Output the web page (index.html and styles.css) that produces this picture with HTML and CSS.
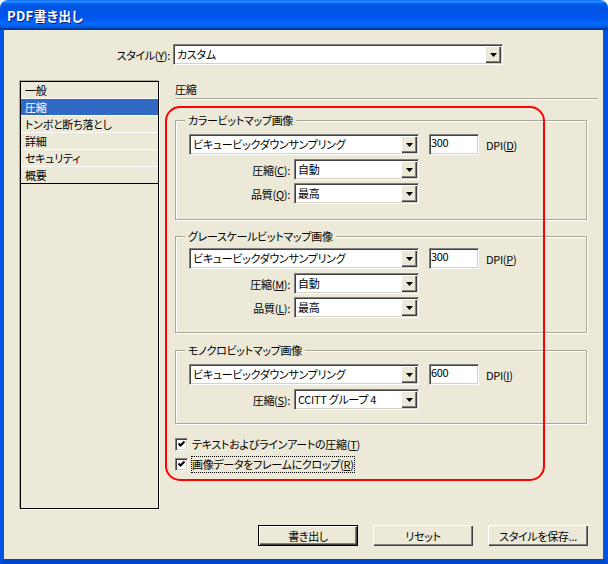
FILE: index.html
```html
<!DOCTYPE html>
<html lang="ja">
<head>
<meta charset="utf-8">
<title>PDF書き出し</title>
<link rel="stylesheet" href="styles.css">
</head>
<body>
<div class="window">
  <div class="titlebar"><span class="title">PDF書き出し</span></div>
  <div class="client">
    <div class="style-row">
      <span class="style-label">スタイル(<u>Y</u>):</span>
      <div class="combo combo-style"><span class="combo-text">カスタム</span><span class="drop"><svg width="7" height="4" viewBox="0 0 7 4"><polygon points="0,0 7,0 3.5,4" fill="#000"/></svg></span></div>
    </div>
    <div class="main">
      <ul class="nav">
        <li>一般</li>
        <li class="selected">圧縮</li>
        <li>トンボと断ち落とし</li>
        <li>詳細</li>
        <li>セキュリティ</li>
        <li class="last">概要</li>
      </ul>
      <div class="panel">
        <div class="panel-title">圧縮</div>

        <div class="group g1">
          <div class="group-title">カラービットマップ画像</div>
          <div class="row row-main">
            <div class="combo combo-method"><span class="combo-text">ビキュービックダウンサンプリング</span><span class="drop"><svg width="7" height="4" viewBox="0 0 7 4"><polygon points="0,0 7,0 3.5,4" fill="#000"/></svg></span></div>
            <div class="field">300</div>
            <span class="unit">DPI(<u>D</u>)</span>
          </div>
          <div class="row row-sub">
            <span class="sub-label">圧縮(<u>C</u>):</span>
            <div class="combo combo-sub"><span class="combo-text">自動</span><span class="drop"><svg width="7" height="4" viewBox="0 0 7 4"><polygon points="0,0 7,0 3.5,4" fill="#000"/></svg></span></div>
          </div>
          <div class="row row-sub">
            <span class="sub-label">品質(<u>Q</u>):</span>
            <div class="combo combo-sub"><span class="combo-text">最高</span><span class="drop"><svg width="7" height="4" viewBox="0 0 7 4"><polygon points="0,0 7,0 3.5,4" fill="#000"/></svg></span></div>
          </div>
        </div>

        <div class="group g2">
          <div class="group-title">グレースケールビットマップ画像</div>
          <div class="row row-main">
            <div class="combo combo-method"><span class="combo-text">ビキュービックダウンサンプリング</span><span class="drop"><svg width="7" height="4" viewBox="0 0 7 4"><polygon points="0,0 7,0 3.5,4" fill="#000"/></svg></span></div>
            <div class="field">300</div>
            <span class="unit">DPI(<u>P</u>)</span>
          </div>
          <div class="row row-sub">
            <span class="sub-label">圧縮(<u>M</u>):</span>
            <div class="combo combo-sub"><span class="combo-text">自動</span><span class="drop"><svg width="7" height="4" viewBox="0 0 7 4"><polygon points="0,0 7,0 3.5,4" fill="#000"/></svg></span></div>
          </div>
          <div class="row row-sub">
            <span class="sub-label">品質(<u>L</u>):</span>
            <div class="combo combo-sub"><span class="combo-text">最高</span><span class="drop"><svg width="7" height="4" viewBox="0 0 7 4"><polygon points="0,0 7,0 3.5,4" fill="#000"/></svg></span></div>
          </div>
        </div>

        <div class="group g3">
          <div class="group-title">モノクロビットマップ画像</div>
          <div class="row row-main">
            <div class="combo combo-method"><span class="combo-text">ビキュービックダウンサンプリング</span><span class="drop"><svg width="7" height="4" viewBox="0 0 7 4"><polygon points="0,0 7,0 3.5,4" fill="#000"/></svg></span></div>
            <div class="field">600</div>
            <span class="unit">DPI(<u>I</u>)</span>
          </div>
          <div class="row row-sub">
            <span class="sub-label">圧縮(<u>S</u>):</span>
            <div class="combo combo-sub"><span class="combo-text">CCITT グループ 4</span><span class="drop"><svg width="7" height="4" viewBox="0 0 7 4"><polygon points="0,0 7,0 3.5,4" fill="#000"/></svg></span></div>
          </div>
        </div>

        <div class="check check-first">
          <span class="box"><svg width="9" height="9" viewBox="0 0 9 9"><polyline points="1.5,3.5 3.5,5.5 7.5,1.5" fill="none" stroke="#000" stroke-width="2"/></svg></span>
          <span class="check-text">テキストおよびラインアートの圧縮(<u>T</u>)</span>
        </div>
        <div class="check">
          <span class="box"><svg width="9" height="9" viewBox="0 0 9 9"><polyline points="1.5,3.5 3.5,5.5 7.5,1.5" fill="none" stroke="#000" stroke-width="2"/></svg></span>
          <span class="check-text focus">画像データをフレームにクロップ(<u>R</u>)</span>
        </div>
      </div>
      <div class="highlight"></div>
    </div>
    <div class="buttons">
      <button class="btn btn-default">書き出し</button>
      <button class="btn">リセット</button>
      <button class="btn">スタイルを保存...</button>
    </div>
  </div>
</div>
</body>
</html>
```

FILE: styles.css
```css
* { box-sizing: border-box; }
html, body { margin: 0; padding: 0; }
body {
  width: 608px;
  height: 564px;
  overflow: hidden;
  background: #fff;
  font-family: "Noto Sans CJK JP", "Liberation Sans", sans-serif;
  font-size: 11px;
  letter-spacing: -0.3px;
  font-feature-settings: "palt";
  color: #000;
}
u { text-decoration: underline; text-underline-offset: 1px; }

.window {
  width: 608px;
  height: 564px;
  display: flex;
  flex-direction: column;
}
.titlebar {
  flex: none;
  height: 30px;
  border-radius: 8px 8px 0 0;
  background: linear-gradient(to bottom, #0058EE 0%, #3593FF 4%, #288EFF 6%, #127DFF 8%, #036FFC 10%, #0262EE 14%, #0057E5 20%, #0054E3 24%, #0055EB 56%, #005BF5 66%, #026AFE 76%, #0062EF 86%, #0052D6 92%, #0040AB 94%, #003092 100%);
  display: flex;
  align-items: center;
  padding-left: 7px;
}
.title {
  color: #fff;
  font-weight: bold;
  font-size: 13px;
  letter-spacing: 0.3px;
  text-shadow: 1px 1px 0 #0a1a80;
}
.client {
  flex: 1;
  background: #ECE9D8;
  border-left: 4px solid #0054E3;
  border-right: 5px solid #0054E3;
  border-bottom: 5px solid #0047D0;
  padding-top: 14px;
  display: flex;
  flex-direction: column;
}

.style-row {
  display: flex;
  align-items: center;
  height: 21px;
}
.style-label {
  width: 166px;
  text-align: right;
  margin-right: 3px;
}

.combo {
  display: flex;
  height: 21px;
  border: 1px solid;
  border-color: #808080 #fff #fff #808080;
  padding: 1px;
  box-shadow: inset 1px 1px 0 #404040, inset -1px -1px 0 #d4d0c8;
  background: #fff;
}
.combo-text {
  flex: 1;
  padding-left: 2px;
  line-height: 17px;
  white-space: nowrap;
  overflow: hidden;
}
.drop {
  width: 16px;
  height: 17px;
  background: #ECE9D8;
  box-shadow: inset 1px 1px 0 #fff, inset -1px -1px 0 #404040, inset -2px -2px 0 #808080;
  display: flex;
  align-items: center;
  justify-content: center;
}
.drop svg { display: block; }
.combo-style { width: 330px; }
.combo-method { width: 230px; }
.combo-sub { width: 125px; }

.main {
  position: relative;
  display: flex;
  margin-top: 16px;
  padding-left: 16px;
  height: 428px;
}
.nav {
  list-style: none;
  margin: 0;
  padding: 0;
  width: 139px;
  height: 428px;
  border: 1px solid #000;
  box-shadow: 1px 1px 0 #fff, -1px -1px 0 #aca899;
}
.nav li {
  height: 17px;
  line-height: 16px;
  padding-left: 4px;
  border-bottom: 1px solid #fff;
  white-space: nowrap;
}
.nav li.selected {
  background: #316AC5;
  color: #fff;
}
.nav li.last { border-bottom-color: #000; }

.panel {
  margin-left: 16px;
  width: 423px;
}
.panel-title {
  height: 18px;
  line-height: 17px;
  border-bottom: 1px solid #aca899;
  box-shadow: 0 1px 0 #fff;
}

.group {
  width: 412px;
  border: 1px solid #aca899;
  box-shadow: inset 1px 1px 0 #fff, 1px 1px 0 #fff;
  padding-left: 13px;
}
.g1 { margin-top: 21px; height: 100px; }
.g2 { margin-top: 16px; height: 97px; }
.g3 { margin-top: 17px; height: 74px; }
.group-title {
  width: max-content;
  margin: -9px 0 6px -4px;
  padding: 0 3px;
  background: #ECE9D8;
  line-height: 16px;
  height: 16px;
}
.g2 .group-title { margin-bottom: 4px; }

.row {
  display: flex;
  align-items: center;
  height: 21px;
}
.row-main { margin-bottom: 4px; }
.row-sub + .row-sub { margin-top: 3px; }
.sub-label {
  width: 101px;
  margin-right: 4px;
  text-align: right;
  white-space: nowrap;
}
.field {
  width: 50px;
  height: 21px;
  margin-left: 10px;
  border: 1px solid;
  border-color: #808080 #fff #fff #808080;
  box-shadow: inset 1px 1px 0 #404040, inset -1px -1px 0 #d4d0c8;
  background: #fff;
  padding-left: 1px;
  line-height: 15px;
}
.unit { margin-left: 7px; }

.check {
  display: flex;
  align-items: center;
  height: 17px;
  margin-top: 3px;
  width: max-content;
}
.check-first { margin-top: 12px; }
.box {
  width: 13px;
  height: 13px;
  border: 1px solid;
  border-color: #808080 #fff #fff #808080;
  box-shadow: inset 1px 1px 0 #404040, inset -1px -1px 0 #d4d0c8;
  background: #fff;
  margin-right: 4px;
  display: flex;
  align-items: center;
  justify-content: center;
}
.box svg { display: block; }
.check-text { line-height: 15px; white-space: nowrap; }
.focus { outline: 1px dotted #000; outline-offset: 0; }

.highlight {
  position: absolute;
  left: 161px;
  top: 25px;
  width: 380px;
  height: 375px;
  border: 2px solid #ff0000;
  border-radius: 15px;
  pointer-events: none;
}

.buttons {
  display: flex;
  justify-content: flex-end;
  gap: 15px;
  padding-right: 15px;
  margin-top: 16px;
}
.btn {
  width: 100px;
  height: 21px;
  margin: 0;
  padding: 0;
  font: inherit;
  letter-spacing: inherit;
  color: #000;
  background: #ECE9D8;
  border: none;
  box-shadow: inset 1px 1px 0 #fff, inset -1px -1px 0 #404040, inset -2px -2px 0 #808080;
}
.btn-default {
  border: 1px solid #000;
}
```
